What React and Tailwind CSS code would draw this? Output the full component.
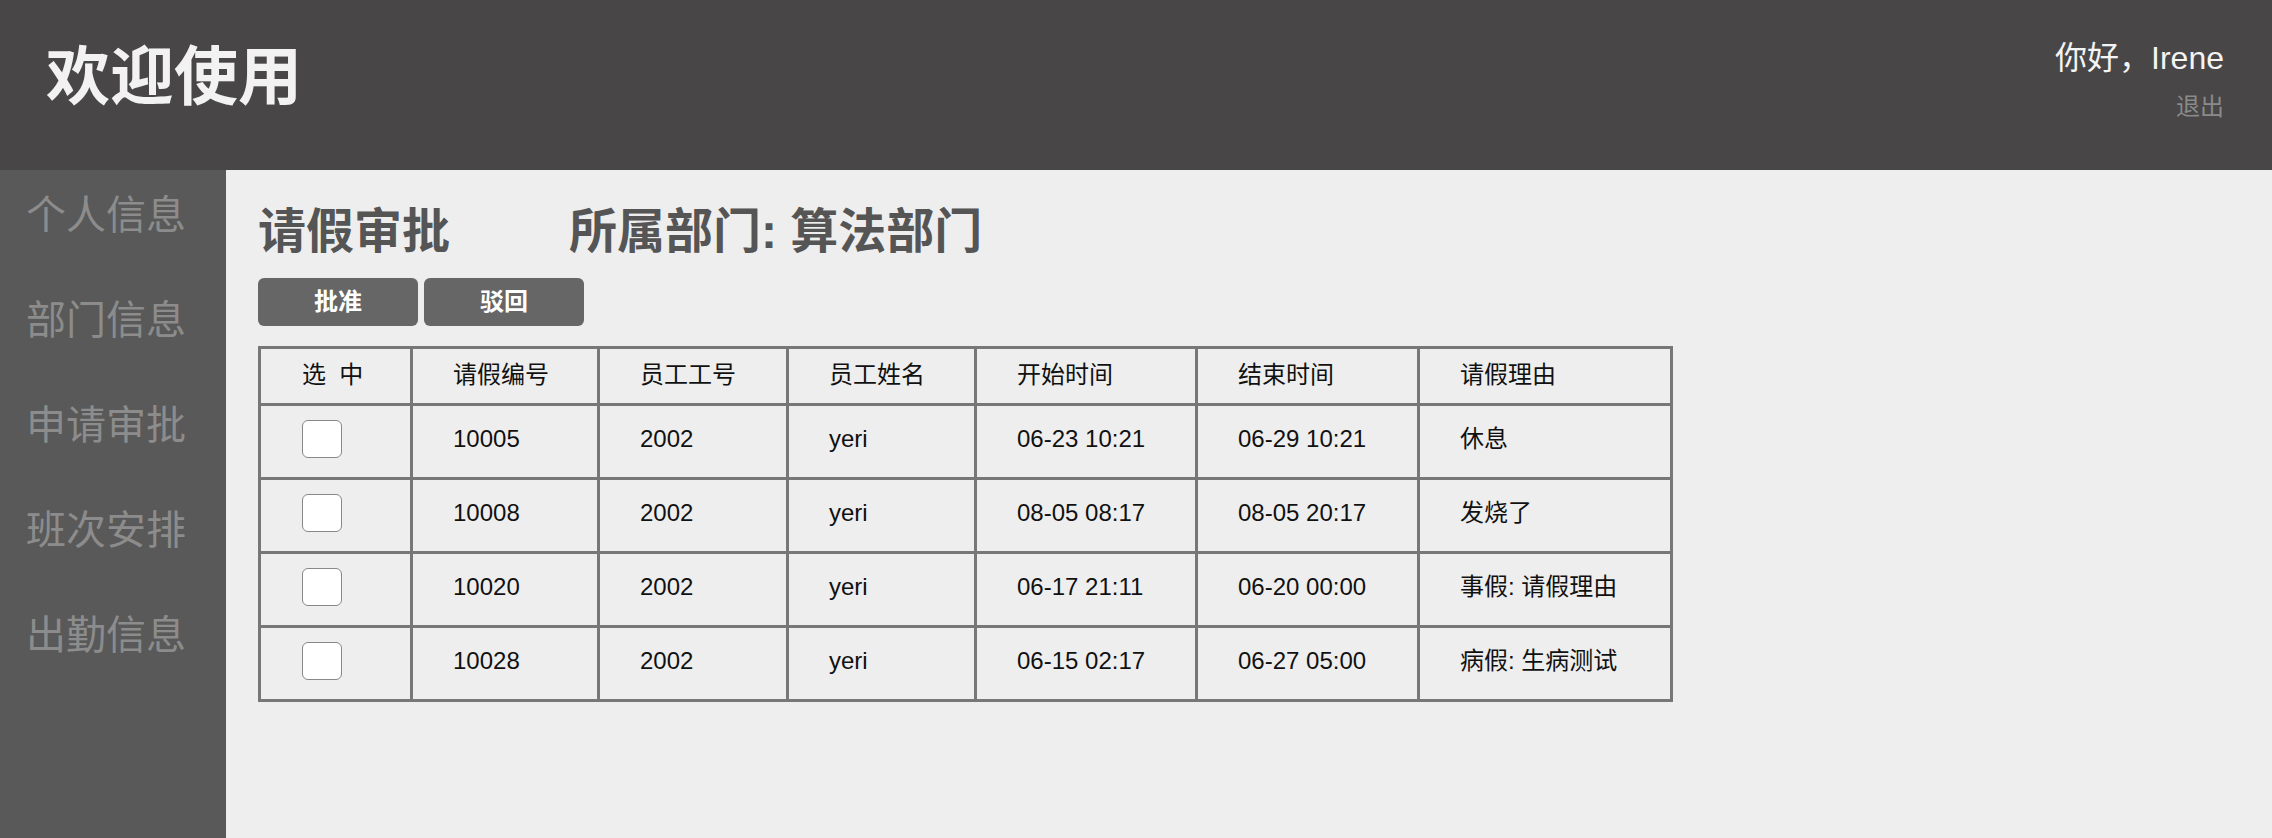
const rows = [
  { id: "10005", no: "2002", name: "yeri", start: "06-23 10:21", end: "06-29 10:21", reason: "休息" },
  { id: "10008", no: "2002", name: "yeri", start: "08-05 08:17", end: "08-05 20:17", reason: "发烧了" },
  { id: "10020", no: "2002", name: "yeri", start: "06-17 21:11", end: "06-20 00:00", reason: "事假: 请假理由" },
  { id: "10028", no: "2002", name: "yeri", start: "06-15 02:17", end: "06-27 05:00", reason: "病假: 生病测试" },
];

const heads = ["请假编号", "员工工号", "员工姓名", "开始时间", "结束时间", "请假理由"];
const menu = ["个人信息", "部门信息", "申请审批", "班次安排", "出勤信息"];

export default function App() {
  return (
    <div className="h-screen flex flex-col font-['Liberation_Sans','Noto_Sans_CJK_SC',sans-serif] text-[#111]">
      {/* 顶栏 */}
      <header className="h-[170px] shrink-0 bg-[#484647] flex justify-between">
        <h1 className="pl-[46px] pt-[45px] text-[64px] leading-none font-bold text-[#f2f2f2]">欢迎使用</h1>
        <div className="pr-[48px] pt-[42px] flex flex-col items-end">
          <span className="text-[32px] leading-none text-[#f4f4f4]">你好，Irene</span>
          <span className="mt-[21px] text-[24px] leading-none text-[#8a8a8a]">退出</span>
        </div>
      </header>

      <div className="flex flex-1">
        {/* 侧边栏 */}
        <nav className="w-[226px] shrink-0 bg-[#595959] pt-[25px] pl-[26px] flex flex-col gap-[65px]">
          {menu.map((m) => (
            <span key={m} className="text-[40px] leading-[40px] text-[#8c8c8c]">{m}</span>
          ))}
        </nav>

        {/* 主体 */}
        <main className="flex-1 bg-[#eeeeee] pl-[32px] pt-[34px]">
          <div className="flex items-center text-[48px] leading-[56px] font-bold text-[#555]">
            <span>请假审批</span>
            <span className="ml-[119px]">所属部门: 算法部门</span>
          </div>
          <div className="flex gap-[6px] mt-[18px]">
            <button className="w-[160px] h-[48px] rounded-[6px] bg-[#666] text-white text-[24px] font-bold">批准</button>
            <button className="w-[160px] h-[48px] rounded-[6px] bg-[#666] text-white text-[24px] font-bold">驳回</button>
          </div>

          <div className="mt-[20px] w-fit grid grid-cols-[152px_187px_189px_188px_221px_222px_253px] border-l-[3px] border-t-[3px] border-[#777] text-[24px]">
            <div className="h-[57px] flex items-center pl-[41px] pb-[2px] border-r-[3px] border-b-[3px] border-[#777]">选&nbsp;&nbsp;中</div>
            {heads.map((h) => (
              <div key={h} className="h-[57px] flex items-center pl-[40px] pb-[2px] border-r-[3px] border-b-[3px] border-[#777]">{h}</div>
            ))}
            {rows.map((r) => (
              <div key={r.id} className="contents">
                <div className="h-[74px] flex items-center pl-[41px] pb-[6px] border-r-[3px] border-b-[3px] border-[#777]">
                  <input type="checkbox" className="appearance-none w-[40px] h-[38px] rounded-[6px] border border-[#888] bg-white" />
                </div>
                {[r.id, r.no, r.name, r.start, r.end, r.reason].map((v, i) => (
                  <div key={i} className="h-[74px] flex items-center pl-[40px] pb-[6px] border-r-[3px] border-b-[3px] border-[#777]">{v}</div>
                ))}
              </div>
            ))}
          </div>
        </main>
      </div>
    </div>
  );
}
